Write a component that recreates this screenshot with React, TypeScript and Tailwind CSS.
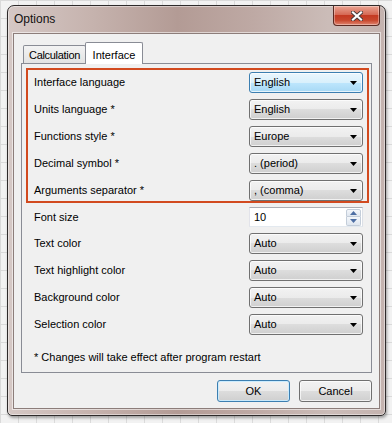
import { type ReactNode } from "react";

function Arrow() {
  return (
    <svg width="7" height="4" viewBox="0 0 7 4">
      <path d="M0 0h7L3.5 4z" fill="#000" />
    </svg>
  );
}

function Combo({ value, active }: { value: string; active?: boolean }) {
  return (
    <div
      className={
        active
          ? "w-[114px] h-[21px] rounded-[3px] border border-[#3c7fb1] bg-[linear-gradient(#eaf6fd,#d9f0fc_50%,#bee6fd_50%,#a7d9f5)] shadow-[inset_0_0_0_1px_rgba(255,255,255,0.7)] flex items-center justify-between pl-[4px] pr-[5px]"
          : "w-[114px] h-[21px] rounded-[3px] border border-[#707070] bg-[linear-gradient(#f2f2f2,#ebebeb_50%,#dddddd_50%,#cfcfcf)] shadow-[inset_0_0_0_1px_rgba(255,255,255,0.7)] flex items-center justify-between pl-[4px] pr-[5px]"
      }
    >
      <span>{value}</span>
      <Arrow />
    </div>
  );
}

function Spinner({ value }: { value: string }) {
  return (
    <div className="w-[114px] h-[20px] border border-[#abadb3] border-l-[#e2e3ea] border-r-[#dbdfe6] border-b-[#e3e9ef] bg-white flex items-center justify-between pl-[4px] pr-[1px]">
      <span>{value}</span>
      <div className="flex flex-col w-[15px] h-[17px]">
        <div className="h-[8.5px] rounded-t-[2px] border border-[#c3cdd9] bg-[linear-gradient(#f4f7fb,#dfe6ef)] flex items-center justify-center">
          <svg width="7" height="4" viewBox="0 0 7 4">
            <path d="M0 4h7L3.5 0z" fill="#4d6ea3" />
          </svg>
        </div>
        <div className="h-[8.5px] rounded-b-[2px] border border-t-0 border-[#c3cdd9] bg-[linear-gradient(#f4f7fb,#dfe6ef)] flex items-center justify-center">
          <svg width="7" height="4" viewBox="0 0 7 4">
            <path d="M0 0h7L3.5 4z" fill="#4d6ea3" />
          </svg>
        </div>
      </div>
    </div>
  );
}

function Row({ label, children }: { label: string; children: ReactNode }) {
  return (
    <div className="flex items-center">
      <span className="w-[215px]">{label}</span>
      {children}
    </div>
  );
}

export default function App() {
  return (
    <div className="w-[392px] h-[423px] overflow-hidden bg-[#f2f2f2] bg-[linear-gradient(#dadada_1px,transparent_1px),linear-gradient(90deg,#dadada_1px,transparent_1px)] bg-[size:18px_18px] pl-[7px] pt-[5px] font-['Liberation_Sans',Arial,sans-serif] text-[11px] text-black">
      <div className="w-[379px] h-[411px] rounded-t-[7px] rounded-b-[5px] border border-[#2e2a2a] bg-[linear-gradient(90deg,#d5c8c5_0%,#c6b3ae_22%,#b39b95_45%,#bea9a4_65%,#cbbcb8_85%,#c4b3af_100%)] shadow-[inset_0_0_0_1px_rgba(255,255,255,0.45),1px_2px_3px_rgba(0,0,0,0.35)] flex flex-col px-[5px] pb-[6px]">
        <div className="h-[27px] flex justify-between">
          <span className="self-center pl-[1px] pb-[1px] text-[12px] text-[#111]">Options</span>
          <div className="w-[47px] h-[20px] rounded-b-[4px] border border-t-0 border-[#5c2a22] bg-[linear-gradient(#eaa493,#d66a55_45%,#c43a22_50%,#c8472d_75%,#e08670)] shadow-[inset_0_0_0_1px_rgba(255,255,255,0.35)] flex items-center justify-center">
            <svg width="12" height="10" viewBox="0 0 12 10">
              <path d="M2 1.5l8 7M10 1.5l-8 7" stroke="#4a3a3a" strokeWidth="4" strokeLinecap="square" />
              <path d="M2 1.5l8 7M10 1.5l-8 7" stroke="#fff" strokeWidth="2.2" strokeLinecap="square" />
            </svg>
          </div>
        </div>
        <div className="flex-1 border border-[#8c7d7a] bg-[#f0f0f0] shadow-[0_0_0_1px_rgba(255,255,255,0.55)] flex flex-col px-[7px] pt-[8px]">
          <div className="h-[21px] flex items-end pl-[2px]">
            <div className="w-[63px] h-[18px] rounded-t-[2px] border border-b-0 border-[#898c95] bg-[linear-gradient(#f3f3f3,#e3e3e3)] flex items-center pl-[5px] pt-[1px] tracking-[-0.3px]">
              Calculation
            </div>
            <div className="relative z-10 -ml-[1px] -mb-[1px] w-[58px] h-[22px] rounded-t-[2px] border border-b-0 border-[#898c95] bg-white flex items-start justify-center pt-[4px]">
              Interface
            </div>
          </div>
          <div className="h-[310px] border border-[#898c95] bg-[#f0f0f0] flex flex-col pt-[4px] pl-[4px]">
            <div className="w-[343px] border-2 border-[#d24a1f] flex flex-col gap-[6px] pt-[2px] pl-[6px]">
              <Row label="Interface language">
                <Combo value="English" active />
              </Row>
              <Row label="Units language *">
                <Combo value="English" />
              </Row>
              <Row label="Functions style *">
                <Combo value="Europe" />
              </Row>
              <Row label="Decimal symbol *">
                <Combo value=". (period)" />
              </Row>
              <Row label="Arguments separator *">
                <Combo value=", (comma)" />
              </Row>
            </div>
            <div className="flex flex-col gap-[6px] mt-[4px] pl-[8px]">
              <Row label="Font size">
                <Spinner value="10" />
              </Row>
              <Row label="Text color">
                <Combo value="Auto" />
              </Row>
              <Row label="Text highlight color">
                <Combo value="Auto" />
              </Row>
              <Row label="Background color">
                <Combo value="Auto" />
              </Row>
              <Row label="Selection color">
                <Combo value="Auto" />
              </Row>
            </div>
            <div className="mt-[16px] pl-[8px] h-[13px] leading-[13px]">* Changes will take effect after program restart</div>
          </div>
          <div className="flex justify-end gap-[9px] mt-[7px]">
            <button className="w-[73px] h-[22px] rounded-[3px] border border-[#3c7fb1] bg-[linear-gradient(#f2f2f2,#ebebeb_50%,#dddddd_50%,#cfcfcf)] shadow-[inset_0_0_0_1px_rgba(200,235,255,0.9)] flex items-center justify-center">
              OK
            </button>
            <button className="w-[73px] h-[22px] rounded-[3px] border border-[#707070] bg-[linear-gradient(#f2f2f2,#ebebeb_50%,#dddddd_50%,#cfcfcf)] shadow-[inset_0_0_0_1px_rgba(255,255,255,0.7)] flex items-center justify-center">
              Cancel
            </button>
          </div>
        </div>
      </div>
    </div>
  );
}
